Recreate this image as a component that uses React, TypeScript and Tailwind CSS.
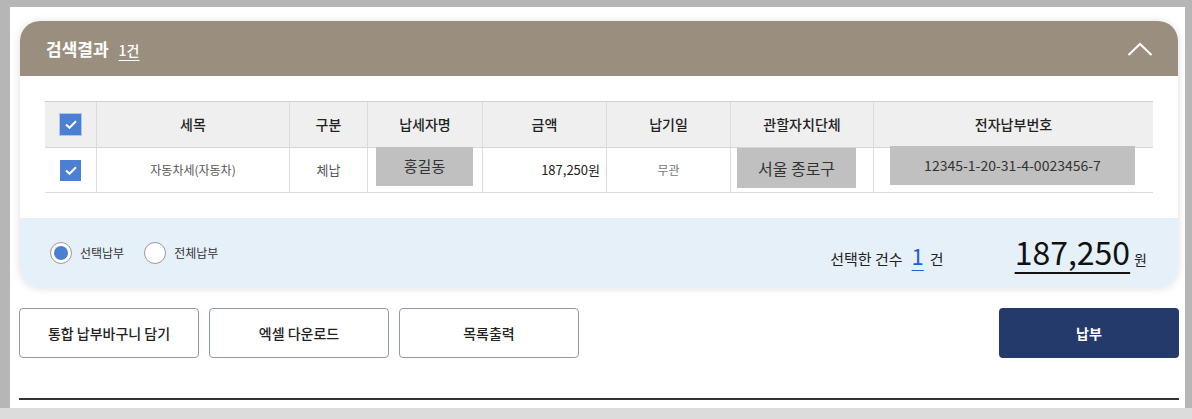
const cols = "grid grid-cols-[52px_193px_78px_115px_124px_124px_143px_279px]";

function Check({ ring }: { ring?: boolean }) {
  return (
    <span
      className={
        ring
          ? "flex h-[23px] w-[23px] items-center justify-center border border-[#a9c8f2] bg-[#4a7fd1]"
          : "flex h-[21px] w-[21px] items-center justify-center bg-[#4a7fd1]"
      }
    >
      <svg width="12" height="9" viewBox="0 0 12 9">
        <path d="M1 4.5 L4.5 7.8 L11 1.2" fill="none" stroke="white" strokeWidth="2" />
      </svg>
    </span>
  );
}

function Radio({ on, label }: { on?: boolean; label: string }) {
  return (
    <label className="flex items-center gap-[8px]">
      <span className="flex h-[22px] w-[22px] items-center justify-center rounded-full border border-[#9a9a9a] bg-white">
        {on && <span className="h-[14px] w-[14px] rounded-full bg-[#4a7fd1]" />}
      </span>
      <span className="text-[12px] text-[#333]">{label}</span>
    </label>
  );
}

function Button({ label }: { label: string }) {
  return (
    <button className="h-[50px] w-[180px] rounded-[4px] border border-[#8f98b3] bg-white text-[14px] font-medium text-[#222]">
      {label}
    </button>
  );
}

export default function App() {
  const heads = ["세목", "구분", "납세자명", "금액", "납기일", "관할자치단체", "전자납부번호"];
  return (
    <div className="h-[419px] w-[1192px] overflow-hidden bg-[#b5b6b5] font-['Noto_Sans_CJK_KR','Noto_Sans',sans-serif]">
      <div className="ml-[10px] mt-[7px] h-[401px] w-[1175px] bg-white pl-[10px] pt-[14px]">
        {/* result card */}
        <div className="w-[1158px] rounded-[20px] shadow-[0_1px_8px_rgba(0,0,0,0.14)]">
          <div className="flex h-[55px] items-center justify-between rounded-t-[20px] bg-[#9a8f7e] pl-[26px] pr-[25px]">
            <div className="flex items-baseline gap-[10px] text-white">
              <span className="text-[17px] font-semibold">검색결과</span>
              <span className="text-[14px] font-medium underline decoration-1 underline-offset-[4px]">1건</span>
            </div>
            <svg width="26" height="14" viewBox="0 0 26 14">
              <polyline points="1.5,13 13,2 24.5,13" fill="none" stroke="white" strokeWidth="2" />
            </svg>
          </div>

          <div className="bg-white px-[25px] py-[25px]">
            <div className={`${cols} h-[47px] border-y border-t-[#cfcfcf] border-b-[#d6d6d6] bg-[#efefef] text-[14px] font-medium text-[#222]`}>
              <div className="flex items-center justify-center border-r border-[#dcdcdc]">
                <Check ring />
              </div>
              {heads.map((h, i) => (
                <div
                  key={h}
                  className={
                    i < heads.length - 1
                      ? "flex items-center justify-center border-r border-[#dcdcdc]"
                      : "flex items-center justify-center"
                  }
                >
                  {h}
                </div>
              ))}
            </div>
            <div className={`${cols} h-[45px] border-b border-[#dcdcdc] text-[#555]`}>
              <div className="flex items-center justify-center border-r border-[#dcdcdc]">
                <Check />
              </div>
              <div className="flex items-center justify-center border-r border-[#dcdcdc] text-[12px]">자동차세(자동차)</div>
              <div className="flex items-center justify-center border-r border-[#dcdcdc] text-[13px]">체납</div>
              <div className="border-r border-[#dcdcdc] px-[8px]">
                <div className="-mt-px flex h-[39px] w-[97px] items-center justify-center bg-[#c0c0c0] text-[15px] text-[#333]">홍길동</div>
              </div>
              <div className="flex items-center justify-end border-r border-[#dcdcdc] pr-[6px] text-[13px] text-[#222]">187,250원</div>
              <div className="flex items-center justify-center border-r border-[#dcdcdc] text-[12px] text-[#777]">무관</div>
              <div className="border-r border-[#dcdcdc] pl-[6px]">
                <div className="flex h-[40px] w-[119px] items-center justify-center bg-[#c0c0c0] text-[16px] text-[#333]">서울 종로구</div>
              </div>
              <div className="pl-[16px]">
                <div className="-mt-[2px] flex h-[39px] w-[245px] items-center justify-center bg-[#c0c0c0] text-[14px] text-[#333]">
                  12345-1-20-31-4-0023456-7
                </div>
              </div>
            </div>
          </div>

          <div className="flex h-[69px] items-center justify-between rounded-b-[20px] bg-[#e6f0f9] pl-[30px] pr-[31px]">
            <div className="flex items-center gap-[20px]">
              <Radio on label="선택납부" />
              <Radio label="전체납부" />
            </div>
            <div className="flex items-baseline text-[#222]">
              <span className="text-[15px]">선택한 건수</span>
              <span className="ml-[9px] text-[22px] leading-none text-[#1f5fcc] underline decoration-1 underline-offset-[5px]">1</span>
              <span className="ml-[6px] text-[15px]">건</span>
              <span className="ml-[71px] text-[32px] leading-none text-[#111] underline decoration-[1.5px] underline-offset-[7px]">187,250</span>
              <span className="ml-[4px] text-[14px]">원</span>
            </div>
          </div>
        </div>

        {/* actions */}
        <div className="-ml-px mt-[21px] flex w-[1160px] items-center justify-between">
          <div className="flex gap-[10px]">
            <Button label="통합 납부바구니 담기" />
            <Button label="엑셀 다운로드" />
            <Button label="목록출력" />
          </div>
          <button className="h-[50px] w-[180px] rounded-[4px] bg-[#233a6b] text-[14px] font-bold text-white">납부</button>
        </div>
        <div className="-ml-px mt-[40px] h-[2px] w-[1160px] bg-[#333]" />
      </div>
      <div className="h-[11px] bg-[#dcdcdc]" />
    </div>
  );
}
